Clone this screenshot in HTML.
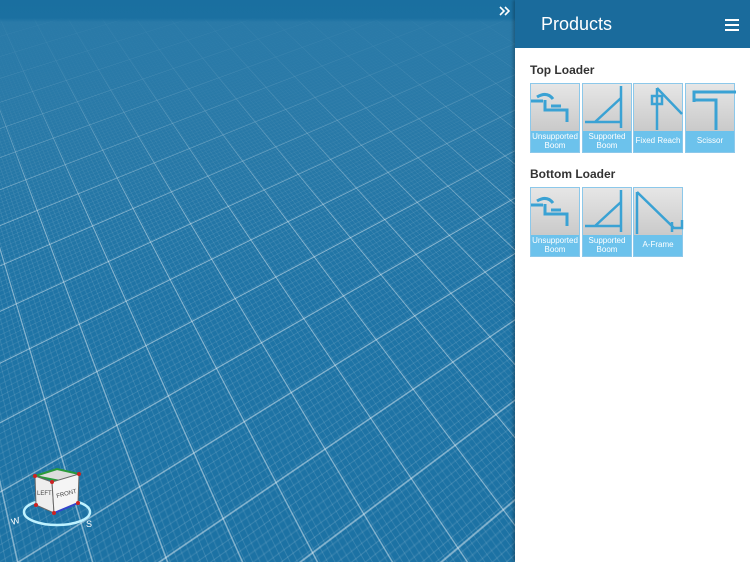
<!DOCTYPE html>
<html><head><meta charset="utf-8"><style>
*{margin:0;padding:0;box-sizing:border-box}
html{overflow:hidden;width:750px;height:562px}
body{width:750px;height:562px;overflow:hidden;font-family:"Liberation Sans",sans-serif;background:#1d73a5;position:relative}
#scene{position:absolute;left:0;top:0;width:515px;height:562px;overflow:clip;contain:paint;background:linear-gradient(#1a6fa0 0,#1a6fa0 20px,#2a7aa8 24px,#2a7aa8 90px,#1f74a6 300px,#1c72a4 100%)}
#persp{position:absolute;left:0;top:0;width:515px;height:562px;perspective:700px;perspective-origin:315px -150px;transform:scaleX(-1)}
#plane{position:absolute;left:-2000px;top:-1800px;width:4500px;height:4500px;transform-origin:2250px 2250px;transform:translateY(500px) rotateX(68deg) rotateZ(28deg);
background-image:
linear-gradient(rgba(255,255,255,.45) 0 2px,transparent 2px),
linear-gradient(90deg,rgba(255,255,255,.45) 0 2px,transparent 2px),
linear-gradient(rgba(255,255,255,.17) 0 1px,transparent 1px),
linear-gradient(90deg,rgba(255,255,255,.17) 0 1px,transparent 1px);
background-size:92px 92px,92px 92px,9.2px 9.2px,9.2px 9.2px}
#fade{position:absolute;left:0;top:0;width:515px;height:220px;background:linear-gradient(#2a7aa8 0,rgba(42,122,168,.8) 70px,rgba(42,122,168,0) 220px)}
#topband{position:absolute;left:0;top:0;width:515px;height:22px;background:linear-gradient(#1a6fa0,#1b70a1 18px,rgba(27,112,161,.0))}
#panel{position:absolute;left:515px;top:0;width:235px;height:562px;background:#fff;box-shadow:-2px 0 3px rgba(0,0,0,.25)}
#hdr{height:48px;background:#1a6b9c;color:#fff;position:relative}
#hdr h1{position:absolute;left:26px;top:14px;font-size:18px;font-weight:normal}
.ham{position:absolute;left:210px;width:14px;height:2px;background:#fff}
h2{position:absolute;left:15px;font-size:12px;font-weight:bold;color:#333}
.tile{position:absolute;width:50px;height:70px;background:linear-gradient(#e6e6e6,#bdbdbd);border:1px solid #8cc8ea}
.tile .lb{position:absolute;left:0;right:0;bottom:0;height:21px;background:#6cc2ec;color:#fff;font-size:8px;text-align:center;display:flex;align-items:center;justify-content:center;line-height:8.5px}
.tile svg{position:absolute;left:0;top:0}
</style></head><body>
<div id="scene"><div id="persp"><div id="plane"></div></div><div id="fade"></div><div id="topband"></div>
<svg style="position:absolute;left:497px;top:5px" width="14" height="12"><path d="M3 2l4 4-4 4M8 2l4 4-4 4" stroke="#fff" stroke-width="1.6" fill="none"/></svg>
<svg style="position:absolute;left:8px;top:465px" width="95" height="70">
<ellipse cx="49" cy="47" rx="33" ry="13" fill="none" stroke="#bff2ff" stroke-width="2.5"/>
<text x="4" y="59" fill="#fff" font-size="9" transform="rotate(-15 8 59)">W</text>
<text x="78" y="62" fill="#fff" font-size="9">S</text>
<polygon points="27,11 49,4 71,9 57,17" fill="#ddd" stroke="#2a9a3a" stroke-width="2"/>
<polygon points="27,11 44,17 46,48 28,40" fill="#eee" stroke="#666"/>
<polygon points="44,17 71,9 70,38 46,48" fill="#f5f5f5" stroke="#666"/>
<line x1="46" y1="48" x2="70" y2="38" stroke="#3344cc" stroke-width="2"/>
<text x="29" y="30" font-size="6" fill="#444">LEFT</text>
<text x="49" y="33" font-size="6" fill="#444" transform="rotate(-15 49 33)">FRONT</text>
<circle cx="27" cy="11" r="2" fill="#c22"/><circle cx="44" cy="17" r="2" fill="#c22"/><circle cx="71" cy="9" r="2" fill="#c22"/><circle cx="46" cy="48" r="2" fill="#c22"/><circle cx="70" cy="38" r="2" fill="#c22"/><circle cx="28" cy="40" r="2" fill="#c22"/>
</svg>
</div>
<div id="panel">
<div id="hdr"><h1>Products</h1><div class="ham" style="top:19px"></div><div class="ham" style="top:24px"></div><div class="ham" style="top:29px"></div></div>
<h2 style="top:63px">Top Loader</h2>
<div class="tile" style="left:15px;top:83px"><svg width="50" height="50"><path d="M0 17H12M6 13q10-6 16 2M14 16v10h22v12M20 22h10" stroke="#3aa2d4" stroke-width="3" fill="none"/></svg><div class="lb">Unsupported<br>Boom</div></div>
<div class="tile" style="left:67px;top:83px"><svg width="50" height="50"><path d="M38 2V44M2 38H38M12 38L38 14" stroke="#3aa2d4" stroke-width="2.5" fill="none"/></svg><div class="lb">Supported<br>Boom</div></div>
<div class="tile" style="left:118px;top:83px"><svg width="50" height="50"><path d="M23 4V46M23 4L48 30M18 12h10v8h-10z" stroke="#3aa2d4" stroke-width="2.5" fill="none"/></svg><div class="lb">Fixed Reach</div></div>
<div class="tile" style="left:170px;top:83px"><svg width="50" height="50"><path d="M50 8H8v8h22V46M8 8v10" stroke="#3aa2d4" stroke-width="3" fill="none"/></svg><div class="lb">Scissor</div></div>
<h2 style="top:167px">Bottom Loader</h2>
<div class="tile" style="left:15px;top:187px"><svg width="50" height="50"><path d="M0 17H12M6 13q10-6 16 2M14 16v10h22v12M20 22h10" stroke="#3aa2d4" stroke-width="3" fill="none"/></svg><div class="lb">Unsupported<br>Boom</div></div>
<div class="tile" style="left:67px;top:187px"><svg width="50" height="50"><path d="M38 2V44M2 38H38M12 38L38 14" stroke="#3aa2d4" stroke-width="2.5" fill="none"/></svg><div class="lb">Supported<br>Boom</div></div>
<div class="tile" style="left:118px;top:187px"><svg width="50" height="50"><path d="M3 4V46M3 4L40 40h8v-8M38 34v10" stroke="#3aa2d4" stroke-width="2.5" fill="none"/></svg><div class="lb">A-Frame</div></div>
</div>
</body></html>
